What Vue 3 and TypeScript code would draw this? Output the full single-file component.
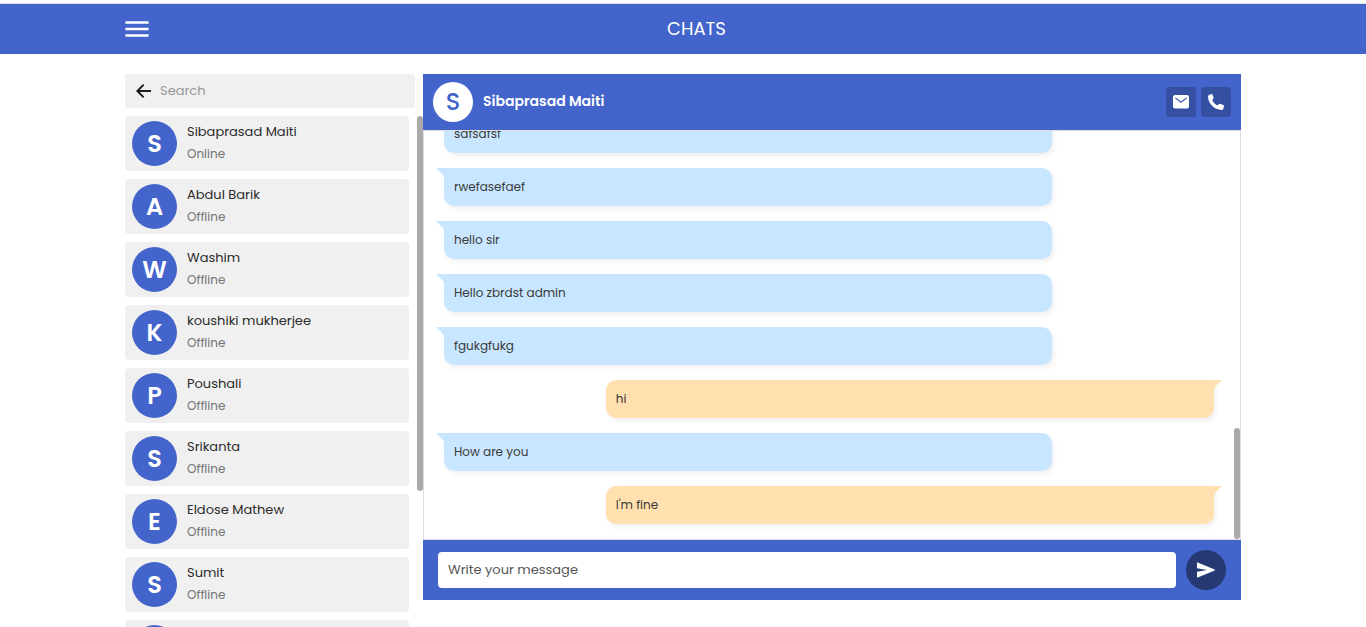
<script setup lang="ts">
import { ref } from 'vue'

interface Contact {
  name: string
  status: string
}

interface Message {
  text: string
  sent?: boolean
}

const contacts: Contact[] = [
  { name: 'Sibaprasad Maiti', status: 'Online' },
  { name: 'Abdul Barik', status: 'Offline' },
  { name: 'Washim', status: 'Offline' },
  { name: 'koushiki mukherjee', status: 'Offline' },
  { name: 'Poushali', status: 'Offline' },
  { name: 'Srikanta', status: 'Offline' },
  { name: 'Eldose Mathew', status: 'Offline' },
  { name: 'Sumit', status: 'Offline' },
  { name: '', status: '' },
]

const messages = ref<Message[]>([
  { text: 'sdfsdfsf' },
  { text: 'rwefasefaef' },
  { text: 'hello sir' },
  { text: 'Hello zbrdst admin' },
  { text: 'fgukgfukg' },
  { text: 'hi', sent: true },
  { text: 'How are you' },
  { text: "I'm fine", sent: true },
])

const search = ref('')
const draft = ref('')

const initial = (name: string): string => name.charAt(0).toUpperCase()

function send(): void {
  const text = draft.value.trim()
  if (!text) return
  messages.value.push({ text, sent: true })
  draft.value = ''
}
</script>

<template>
  <div class="page">
    <header class="topbar">
      <div class="container topbar-inner">
        <button class="menu" type="button" aria-label="Menu">
          <svg viewBox="0 0 24 18" width="24" height="18" aria-hidden="true">
            <path d="M.4 2.500h23.200M.4 9h23.200M.4 15.500h23.200" stroke="#fff" stroke-width="2.500" />
          </svg>
        </button>
        <h1>CHATS</h1>
      </div>
    </header>

    <main class="container content">
      <aside class="sidebar">
        <div class="search">
          <button class="back" type="button" aria-label="Back">
            <svg viewBox="0 0 16 16" width="16" height="16" aria-hidden="true">
              <path d="M7.700 1.600 1.400 8l6.300 6.400M1.600 8H15" fill="none" stroke="#1c1c1c" stroke-width="2" />
            </svg>
          </button>
          <input v-model="search" type="text" placeholder="Search" aria-label="Search" />
        </div>
        <div class="list-wrap">
          <ul class="contacts">
            <li v-for="c in contacts" :key="c.name">
              <a href="#" class="contact">
                <span class="avatar">{{ initial(c.name) }}</span>
                <span class="info">
                  <span class="name">{{ c.name }}</span>
                  <span class="status">{{ c.status }}</span>
                </span>
              </a>
            </li>
          </ul>
          <span class="thumb thumb-list"></span>
        </div>
      </aside>

      <section class="chat">
        <div class="chat-head">
          <span class="avatar light">S</span>
          <h2>Sibaprasad Maiti</h2>
          <div class="actions">
            <button type="button" aria-label="Email">
              <svg viewBox="0 0 16 14" width="16" height="14" aria-hidden="true">
                <rect width="16" height="13.4" rx="2" fill="#fff" />
                <path d="M2.300 2.900 8 7.300l5.700-4.400" fill="none" stroke="#354fa3" stroke-width="1.200" />
              </svg>
            </button>
            <button type="button" aria-label="Call">
              <svg viewBox="0 0 16 16" width="16" height="16" aria-hidden="true">
                <path
                  d="M1.100.9 2.700.2c.8-.4 1.700 0 2 .8l.8 2.300c.2.700 0 1.300-.5 1.800l-.8.9c.9 2.300 2.900 4.300 5.400 5.400l1-1c.5-.5 1.200-.7 1.900-.4l2.400.8c.8.300 1.300 1.200 1 2l-.6 1.900c-.2.800-.9 1.300-1.700 1.300C6.300 16 0 9.500 0 2.600 0 1.900.4 1.200 1.100.9z"
                  fill="#fff"
                />
              </svg>
            </button>
          </div>
        </div>

        <div class="chat-body">
          <div class="messages">
            <p v-for="(m, i) in messages" :key="i" class="bubble" :class="m.sent ? 'sent' : 'received'">
              {{ m.text }}
            </p>
          </div>
          <span class="thumb thumb-chat"></span>
        </div>

        <form class="composer" @submit.prevent="send">
          <input v-model="draft" type="text" placeholder="Write your message" aria-label="Write your message" />
          <button type="submit" aria-label="Send">
            <svg viewBox="0 0 18 16" width="18" height="16" aria-hidden="true">
              <path d="M0 .3 17.700 7.400v1.200L0 15.700V9.700L10 8 0 6.300z" fill="#fff" />
            </svg>
          </button>
        </form>
      </section>
    </main>
  </div>
</template>

<style>
body {
  margin: 0;
  background: #fff;
}
</style>

<style scoped>
.page,
.page * {
  box-sizing: border-box;
}

.page {
  display: flex;
  flex-direction: column;
  height: 100vh;
  overflow: hidden;
  padding-top: 3px;
  font-family: Poppins, Inter, 'Noto Sans', sans-serif;
  color: #3a3a3a;
}

button {
  display: flex;
  align-items: center;
  justify-content: center;
  padding: 0;
  border: 0;
  background: none;
  cursor: pointer;
}

input {
  min-width: 0;
  border: 0;
  outline: 0;
  font-family: inherit;
}

.container {
  width: 100%;
  max-width: 1140px;
  margin: 0 auto;
  padding: 0 12px;
}

.topbar {
  flex: none;
  border-top: 1px solid #ddd;
  background: #4364cb;
}

.topbar-inner {
  display: flex;
  align-items: center;
  height: 50px;
}

h1 {
  flex: 1;
  margin: 0;
  padding-left: 3px;
  text-align: center;
  font-size: 18px;
  font-weight: 400;
  line-height: 26px;
  color: #fff;
}

.content {
  display: flex;
  flex: 1;
  min-height: 0;
  padding-top: 20px;
}

.sidebar {
  display: flex;
  flex: none;
  flex-direction: column;
  gap: 8px;
  width: 298px;
}

.search {
  display: flex;
  flex: none;
  align-items: center;
  gap: 8px;
  height: 34px;
  margin-right: 8px;
  padding: 0 11px;
  border-radius: 3px;
  background: #f0f0f0;
}

.search input {
  flex: 1;
  padding: 0;
  background: none;
  font-size: 13px;
}

.search input::placeholder {
  color: #999;
  opacity: 1;
}

.list-wrap {
  position: relative;
  flex: 1;
  min-height: 0;
  overflow: hidden;
}

.contacts {
  display: flex;
  flex-direction: column;
  gap: 8px;
  margin: 0 14px 0 0;
  padding: 0;
  list-style: none;
}

.contact {
  display: flex;
  align-items: center;
  gap: 10px;
  height: 55px;
  padding: 0 7px;
  border-radius: 4px;
  background: #f0f0f0;
  text-decoration: none;
}

.avatar {
  display: flex;
  flex: none;
  align-items: center;
  justify-content: center;
  width: 45px;
  height: 45px;
  border-radius: 50%;
  background: #4364cb;
  font-size: 24px;
  font-weight: 600;
  line-height: 36px;
  color: #fff;
}

.avatar.light {
  width: 40px;
  height: 40px;
  background: #fff;
  font-weight: 500;
  color: #4364cb;
}

.info {
  display: flex;
  flex-direction: column;
  gap: 2px;
  padding-bottom: 2px;
}

.name {
  font-size: 13px;
  line-height: 20px;
  color: #2b2b2b;
}

.status {
  font-size: 12px;
  line-height: 20px;
  color: #757575;
}

.thumb {
  position: absolute;
  right: 0;
  width: 6px;
  border-radius: 3px;
  background: #aaa;
}

.thumb-list {
  top: 0;
  height: 375px;
}

.thumb-chat {
  bottom: 0;
  height: 111px;
}

.chat {
  display: flex;
  flex: 1;
  flex-direction: column;
  min-width: 0;
  margin-bottom: 27px;
}

.chat-head {
  display: flex;
  flex: none;
  align-items: center;
  gap: 10px;
  height: 56px;
  padding: 0 10px;
  background: #4364cb;
}

h2 {
  flex: 1;
  margin: 0;
  padding-bottom: 2px;
  font-size: 14px;
  font-weight: 600;
  line-height: 20px;
  color: #fff;
}

.actions {
  display: flex;
  gap: 5px;
}

.actions button {
  width: 30px;
  height: 30px;
  border-radius: 3px;
  background: #354fa3;
}

.chat-body {
  position: relative;
  display: flex;
  flex: 1;
  min-height: 0;
  overflow: hidden;
  border: 1px solid #ddd;
}

.messages {
  display: flex;
  flex: 1;
  flex-direction: column;
  justify-content: flex-end;
  gap: 15px;
  margin-right: 6px;
  padding: 0 20px 15px;
}

.bubble {
  position: relative;
  flex: none;
  width: 79%;
  margin: 0;
  padding: 9px 10px;
  border-radius: 10px;
  box-shadow: 2px 3px 5px rgba(0, 0, 0, 0.06);
  font-size: 12px;
  line-height: 20px;
}

.bubble::before {
  content: '';
  position: absolute;
  top: 0;
  width: 8px;
  height: 8px;
  background: inherit;
}

.received {
  border-top-left-radius: 0;
  background: #c8e6ff;
}

.received::before {
  right: 100%;
  clip-path: polygon(0 0, 100% 0, 100% 100%);
}

.sent {
  align-self: flex-end;
  border-top-right-radius: 0;
  background: #ffe0ae;
}

.sent::before {
  left: 100%;
  clip-path: polygon(0 0, 100% 0, 0 100%);
}

.composer {
  display: flex;
  flex: none;
  align-items: center;
  gap: 10px;
  height: 60px;
  padding: 0 15px;
  background: #4364cb;
}

.composer input {
  flex: 1;
  height: 36px;
  padding: 0 10px;
  border-radius: 4px;
  background: #fff;
  font-size: 13px;
}

.composer input::placeholder {
  color: #555;
  opacity: 1;
}

.composer button {
  width: 40px;
  height: 40px;
  border-radius: 50%;
  background: #263973;
}
</style>
